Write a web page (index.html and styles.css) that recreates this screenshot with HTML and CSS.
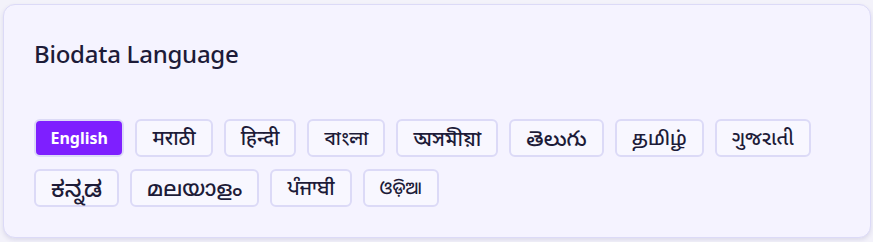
FILE: index.html
```html
<!doctype html>
<html lang="en">
  <head>
    <meta charset="UTF-8" />
    <meta name="viewport" content="width=device-width, initial-scale=1.0" />
    <title>Biodata Language</title>
    <link rel="stylesheet" href="styles.css">
  </head>
  <body>
    <section class="card">
        <h2 class="card-title">Biodata Language</h2>
        <div class="lang-list">
            <button type="button" class="lang active">English</button>
            <button type="button" class="lang native" lang="mr">मराठी</button>
            <button type="button" class="lang native" lang="hi">हिन्दी</button>
            <button type="button" class="lang native" lang="bn">বাংলা</button>
            <button type="button" class="lang native" lang="as">অসমীয়া</button>
            <button type="button" class="lang native" lang="te">తెలుగు</button>
            <button type="button" class="lang native" lang="ta">தமிழ்</button>
            <button type="button" class="lang native" lang="gu">ગુજરાતી</button>
            <button type="button" class="lang native" lang="kn">ಕನ್ನಡ</button>
            <button type="button" class="lang native" lang="ml">മലയാളം</button>
            <button type="button" class="lang native" lang="pa">ਪੰਜਾਬੀ</button>
            <button type="button" class="lang native" lang="or">ଓଡ଼ିଆ</button>
        </div>
    </section>
  </body>
</html>
```

FILE: styles.css
```css
:root {
    font-family: "Noto Sans", "Noto Sans Devanagari", "Noto Sans Bengali", "Noto Sans Telugu", "Noto Sans Tamil", "Noto Sans Gujarati", "Noto Sans Kannada", "Noto Sans Malayalam", "Noto Sans Gurmukhi", "Noto Sans Oriya", sans-serif;
    color: #1d1b38;
}

* {
    box-sizing: border-box;
    margin: 0;
    padding: 0;
}

body {
    background-color: #f3f2fa;
    padding: 4px 2px 4px 3px;
}

.card {
    background-color: #f5f3ff;
    border: 1px solid #dcdaf7;
    border-radius: 12px;
    box-shadow: 0 2px 4px rgba(60, 50, 120, 0.12);
    padding: 30px;
    height: 234px;
}

.card-title {
    font-size: 24px;
    font-weight: 500;
    letter-spacing: -0.25px;
    line-height: 32px;
    margin-top: 3px;
    margin-bottom: 49px;
}

.lang-list {
    display: flex;
    flex-wrap: wrap;
    gap: 12px 11px;
}

.lang {
    font-family: inherit;
    font-size: 16px;
    font-weight: 500;
    line-height: 1;
    height: 38px;
    padding: 0 15px;
    border: 2px solid #dcdaf7;
    border-radius: 6px;
    background-color: #f8f7ff;
    color: #1d1b38;
    cursor: pointer;
}

.lang.native {
    font-size: 20px;
}

.lang:lang(bn) { font-size: 19px; }
.lang:lang(as) { font-size: 20.5px; }
.lang:lang(te) { font-size: 21.4px; }
.lang:lang(ta) { font-size: 19px; }
.lang:lang(kn) { font-size: 23px; }
.lang:lang(ml) { font-size: 21.5px; }
.lang:lang(or) { font-size: 17.5px; }

.lang.active {
    background-color: #7e1fff;
    color: #fff;
    font-weight: 700;
    padding: 0 14.5px;
}
```
